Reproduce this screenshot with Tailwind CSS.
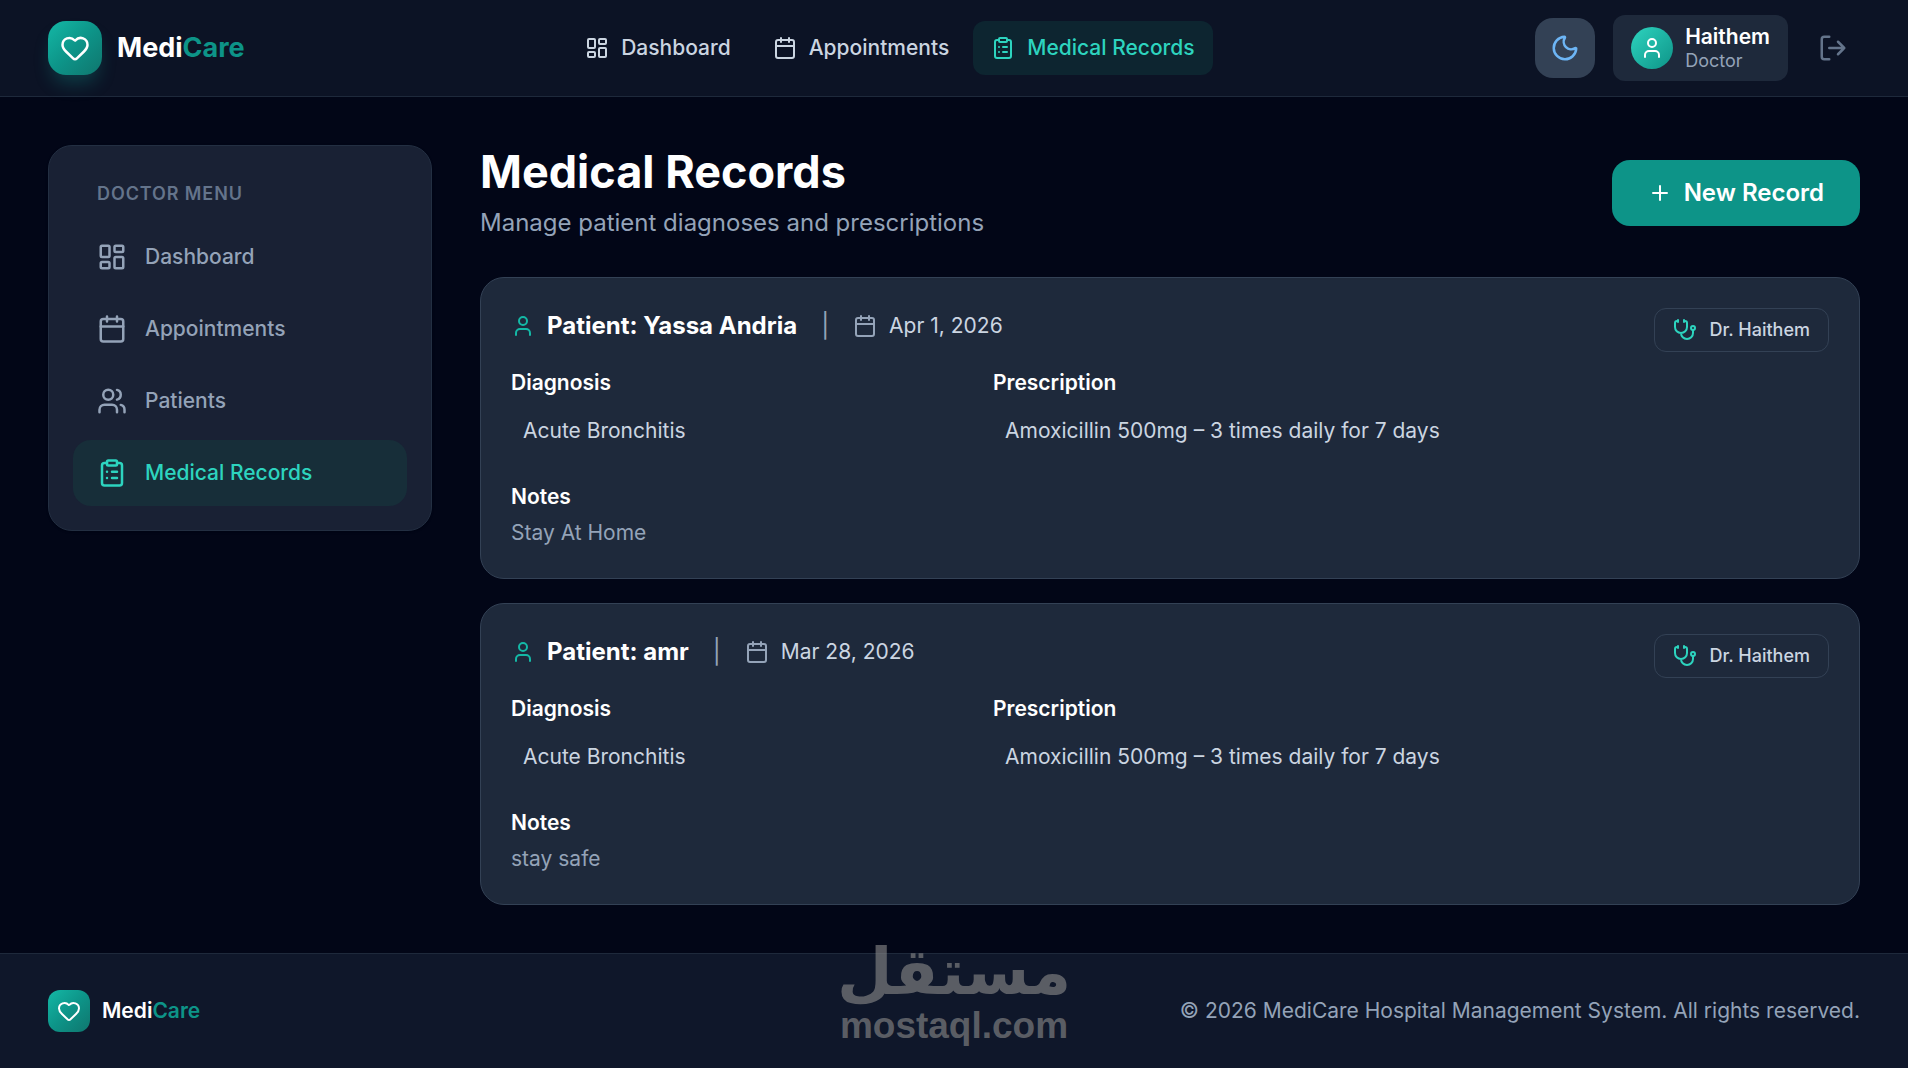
<!DOCTYPE html>
<html lang="en">
<head>
    <meta charset="UTF-8">
    <meta name="viewport" content="width=device-width, initial-scale=1.0">
    <title>MediCare - Medical Records</title>
    <script src="https://cdn.jsdelivr.net/npm/@tailwindcss/browser@4"></script>
</head>
<body class="min-h-screen flex flex-col bg-[#020617] text-white text-[21px] leading-[30px] font-['Inter',sans-serif]">

    <!-- icons -->
    <svg class="hidden" xmlns="http://www.w3.org/2000/svg">
        <symbol id="heart" viewBox="0 0 24 24"><path d="M2 9.5a5.5 5.5 0 0 1 9.591-3.676.56.56 0 0 0 .818 0A5.49 5.49 0 0 1 22 9.5c0 2.29-1.5 4-3 5.5l-5.492 5.313a2 2 0 0 1-3 .019L5 15c-1.5-1.5-3-3.2-3-5.5"/></symbol>
        <symbol id="dashboard" viewBox="0 0 24 24"><rect width="7" height="9" x="3" y="3" rx="1"/><rect width="7" height="5" x="14" y="3" rx="1"/><rect width="7" height="9" x="14" y="12" rx="1"/><rect width="7" height="5" x="3" y="16" rx="1"/></symbol>
        <symbol id="calendar" viewBox="0 0 24 24"><path d="M8 2v4M16 2v4M3 10h18"/><rect width="18" height="18" x="3" y="4" rx="2"/></symbol>
        <symbol id="clipboard" viewBox="0 0 24 24"><rect width="8" height="4" x="8" y="2" rx="1"/><path d="M16 4h2a2 2 0 0 1 2 2v14a2 2 0 0 1-2 2H6a2 2 0 0 1-2-2V6a2 2 0 0 1 2-2h2M12 11h4M12 16h4M8 11h.01M8 16h.01"/></symbol>
        <symbol id="users" viewBox="0 0 24 24"><path d="M16 21v-2a4 4 0 0 0-4-4H6a4 4 0 0 0-4 4v2M16 3.128a4 4 0 0 1 0 7.744M22 21v-2a4 4 0 0 0-3-3.87"/><circle cx="9" cy="7" r="4"/></symbol>
        <symbol id="user" viewBox="0 0 24 24"><path d="M19 21v-2a4 4 0 0 0-4-4H9a4 4 0 0 0-4 4v2"/><circle cx="12" cy="7" r="4"/></symbol>
        <symbol id="moon" viewBox="0 0 24 24"><path d="M20.985 12.486a9 9 0 1 1-9.473-9.472c.405-.022.617.46.402.803a6 6 0 0 0 8.268 8.268c.344-.215.825-.004.803.401"/></symbol>
        <symbol id="logout" viewBox="0 0 24 24"><path d="m16 17 5-5-5-5M21 12H9M9 21H5a2 2 0 0 1-2-2V5a2 2 0 0 1 2-2h4"/></symbol>
        <symbol id="plus" viewBox="0 0 24 24"><path d="M5 12h14M12 5v14"/></symbol>
        <symbol id="stethoscope" viewBox="0 0 24 24"><path d="M11 2v2M5 2v2M5 3H4a2 2 0 0 0-2 2v4a6 6 0 0 0 12 0V5a2 2 0 0 0-2-2h-1M8 15a6 6 0 0 0 12 0v-3"/><circle cx="20" cy="10" r="2"/></symbol>
    </svg>

    <header class="border-b border-[#1e293b] bg-[#0c1325]">
        <div class="h-24 px-12 flex items-center justify-between">
            <a href="#" class="flex items-center gap-[15px]">
                <span class="size-[54px] rounded-[18px] bg-linear-to-br from-[#14b8a6] via-[#0d9488] to-[#0f766e] shadow-[0_12px_18px_-4px] shadow-[#14b8a6]/25 flex items-center justify-center">
                    <svg class="size-[30px] fill-none stroke-white stroke-2 [stroke-linecap:round] [stroke-linejoin:round]"><use href="#heart"/></svg>
                </span>
                <span class="text-[27px] leading-9 font-bold">Medi<span class="text-[#0d9488]">Care</span></span>
            </a>

            <nav class="flex items-center gap-1.5 font-medium text-[#cbd5e1]">
                <a href="#" class="flex items-center gap-3 px-[18px] py-3 rounded-xl">
                    <svg class="size-6 fill-none stroke-current stroke-2 [stroke-linecap:round] [stroke-linejoin:round]"><use href="#dashboard"/></svg>
                    Dashboard
                </a>
                <a href="#" class="flex items-center gap-3 px-[18px] py-3 rounded-xl">
                    <svg class="size-6 fill-none stroke-current stroke-2 [stroke-linecap:round] [stroke-linejoin:round]"><use href="#calendar"/></svg>
                    Appointments
                </a>
                <a href="#" class="flex items-center gap-3 px-[18px] py-3 rounded-xl bg-[#0d2530] text-[#2dd4bf]">
                    <svg class="size-6 fill-none stroke-current stroke-2 [stroke-linecap:round] [stroke-linejoin:round]"><use href="#clipboard"/></svg>
                    Medical Records
                </a>
            </nav>

            <div class="flex items-center gap-[18px]">
                <button type="button" aria-label="Toggle theme" class="size-[60px] rounded-[18px] bg-[#334155] text-[#6db5f5] flex items-center justify-center">
                    <svg class="size-[30px] fill-none stroke-current stroke-2 [stroke-linecap:round] [stroke-linejoin:round]"><use href="#moon"/></svg>
                </button>
                <div class="flex items-center gap-3 px-[18px] py-[9px] rounded-xl bg-[#1e293b]">
                    <span class="size-[42px] rounded-full bg-linear-to-br from-[#2dd4bf] to-[#0d9488] flex items-center justify-center">
                        <svg class="size-6 fill-none stroke-white stroke-2 [stroke-linecap:round] [stroke-linejoin:round]"><use href="#user"/></svg>
                    </span>
                    <div>
                        <p class="leading-[26px] font-semibold">Haithem</p>
                        <p class="text-lg leading-[22px] text-[#94a3b8]">Doctor</p>
                    </div>
                </div>
                <button type="button" aria-label="Log out" class="p-3 text-[#64748b]">
                    <svg class="size-[30px] fill-none stroke-current stroke-2 [stroke-linecap:round] [stroke-linejoin:round]"><use href="#logout"/></svg>
                </button>
            </div>
        </div>
    </header>

    <div class="flex-1 flex items-start gap-12 p-12">
        <aside class="w-96 shrink-0 p-6 rounded-3xl border border-[#232f42] bg-[#192134] shadow-sm">
            <h2 class="px-6 pt-3 pb-[18px] text-lg leading-6 font-semibold tracking-wider text-[#64748b]">DOCTOR MENU</h2>
            <nav class="flex flex-col gap-1.5 font-medium text-[#94a3b8]">
                <a href="#" class="flex items-center gap-[18px] px-6 py-[18px] rounded-[18px]">
                    <svg class="size-[30px] fill-none stroke-current stroke-2 [stroke-linecap:round] [stroke-linejoin:round]"><use href="#dashboard"/></svg>
                    Dashboard
                </a>
                <a href="#" class="flex items-center gap-[18px] px-6 py-[18px] rounded-[18px]">
                    <svg class="size-[30px] fill-none stroke-current stroke-2 [stroke-linecap:round] [stroke-linejoin:round]"><use href="#calendar"/></svg>
                    Appointments
                </a>
                <a href="#" class="flex items-center gap-[18px] px-6 py-[18px] rounded-[18px]">
                    <svg class="size-[30px] fill-none stroke-current stroke-2 [stroke-linecap:round] [stroke-linejoin:round]"><use href="#users"/></svg>
                    Patients
                </a>
                <a href="#" class="flex items-center gap-[18px] px-6 py-[18px] rounded-[18px] bg-[#172e39] text-[#2dd4bf]">
                    <svg class="size-[30px] fill-none stroke-current stroke-2 [stroke-linecap:round] [stroke-linejoin:round]"><use href="#clipboard"/></svg>
                    Medical Records
                </a>
            </nav>
        </aside>

        <main class="flex-1 min-w-0">
            <div class="flex items-center justify-between mb-9">
                <div>
                    <h1 class="text-[45px] leading-[54px] font-bold mb-1.5">Medical Records</h1>
                    <p class="text-2xl leading-9 text-[#94a3b8]">Manage patient diagnoses and prescriptions</p>
                </div>
                <button type="button" class="flex items-center gap-3 px-9 py-[15px] rounded-[18px] bg-[#0d9488] text-2xl leading-9 font-semibold">
                    <svg class="size-6 fill-none stroke-current stroke-2 [stroke-linecap:round] [stroke-linejoin:round]"><use href="#plus"/></svg>
                    New Record
                </button>
            </div>

            <div class="flex flex-col gap-6">
                <article class="p-[30px] rounded-3xl border border-[#334155] bg-[#1e293b]">
                    <div class="flex items-start justify-between mb-4">
                        <div class="flex items-center gap-6">
                            <h3 class="flex items-center gap-3 text-2xl leading-9 font-bold">
                                <svg class="size-6 fill-none stroke-[#14b8a6] stroke-2 [stroke-linecap:round] [stroke-linejoin:round]"><use href="#user"/></svg>
                                Patient: Yassa Andria
                            </h3>
                            <span class="text-2xl leading-9 text-[#94a3b8]">|</span>
                            <p class="flex items-center gap-3 text-[#cbd5e1]">
                                <svg class="size-6 fill-none stroke-[#94a3b8] stroke-2 [stroke-linecap:round] [stroke-linejoin:round]"><use href="#calendar"/></svg>
                                Apr 1, 2026
                            </p>
                        </div>
                        <span class="flex items-center gap-3 px-[18px] py-[9px] rounded-xl border border-[#334155] text-lg leading-6 font-medium text-[#cbd5e1]">
                            <svg class="size-6 fill-none stroke-[#2dd4bf] stroke-2 [stroke-linecap:round] [stroke-linejoin:round]"><use href="#stethoscope"/></svg>
                            Dr. Haithem
                        </span>
                    </div>
                    <div class="grid grid-cols-3 gap-x-32 mb-6">
                        <div>
                            <h4 class="font-semibold mb-1.5">Diagnosis</h4>
                            <p class="p-3 text-[#cbd5e1]">Acute Bronchitis</p>
                        </div>
                        <div class="col-span-2">
                            <h4 class="font-semibold mb-1.5">Prescription</h4>
                            <p class="p-3 text-[#cbd5e1]">Amoxicillin 500mg – 3 times daily for 7 days</p>
                        </div>
                    </div>
                    <h4 class="font-semibold mb-1.5">Notes</h4>
                    <p class="text-[#94a3b8]">Stay At Home</p>
                </article>

                <article class="p-[30px] rounded-3xl border border-[#334155] bg-[#1e293b]">
                    <div class="flex items-start justify-between mb-4">
                        <div class="flex items-center gap-6">
                            <h3 class="flex items-center gap-3 text-2xl leading-9 font-bold">
                                <svg class="size-6 fill-none stroke-[#14b8a6] stroke-2 [stroke-linecap:round] [stroke-linejoin:round]"><use href="#user"/></svg>
                                Patient: amr
                            </h3>
                            <span class="text-2xl leading-9 text-[#94a3b8]">|</span>
                            <p class="flex items-center gap-3 text-[#cbd5e1]">
                                <svg class="size-6 fill-none stroke-[#94a3b8] stroke-2 [stroke-linecap:round] [stroke-linejoin:round]"><use href="#calendar"/></svg>
                                Mar 28, 2026
                            </p>
                        </div>
                        <span class="flex items-center gap-3 px-[18px] py-[9px] rounded-xl border border-[#334155] text-lg leading-6 font-medium text-[#cbd5e1]">
                            <svg class="size-6 fill-none stroke-[#2dd4bf] stroke-2 [stroke-linecap:round] [stroke-linejoin:round]"><use href="#stethoscope"/></svg>
                            Dr. Haithem
                        </span>
                    </div>
                    <div class="grid grid-cols-3 gap-x-32 mb-6">
                        <div>
                            <h4 class="font-semibold mb-1.5">Diagnosis</h4>
                            <p class="p-3 text-[#cbd5e1]">Acute Bronchitis</p>
                        </div>
                        <div class="col-span-2">
                            <h4 class="font-semibold mb-1.5">Prescription</h4>
                            <p class="p-3 text-[#cbd5e1]">Amoxicillin 500mg – 3 times daily for 7 days</p>
                        </div>
                    </div>
                    <h4 class="font-semibold mb-1.5">Notes</h4>
                    <p class="text-[#94a3b8]">stay safe</p>
                </article>
            </div>
        </main>
    </div>

    <footer class="relative border-t border-[#1e293b] bg-[#0f172a]">
        <div class="px-12 py-9 flex items-center justify-between">
            <a href="#" class="flex items-center gap-3 font-semibold">
                <span class="size-[42px] rounded-xl bg-linear-to-br from-[#14b8a6] via-[#0d9488] to-[#0f766e] flex items-center justify-center">
                    <svg class="size-6 fill-none stroke-white stroke-2 [stroke-linecap:round] [stroke-linejoin:round]"><use href="#heart"/></svg>
                </span>
                <span>Medi<span class="text-[#0d9488]">Care</span></span>
            </a>
            <p class="text-[#94a3b8]">© 2026 MediCare Hospital Management System. All rights reserved.</p>
        </div>

        <!-- watermark over the page edge -->
        <div class="absolute inset-x-0 bottom-6 flex flex-col items-center font-bold text-[#8c8c8c] opacity-60 pointer-events-none">
            <span lang="ar" dir="rtl" class="font-['DejaVu_Sans',sans-serif] text-[64px] leading-[72px]">مستقل</span>
            <span class="font-['Liberation_Sans',sans-serif] text-[37px] leading-9">mostaql.com</span>
        </div>
    </footer>

</body>
</html>
